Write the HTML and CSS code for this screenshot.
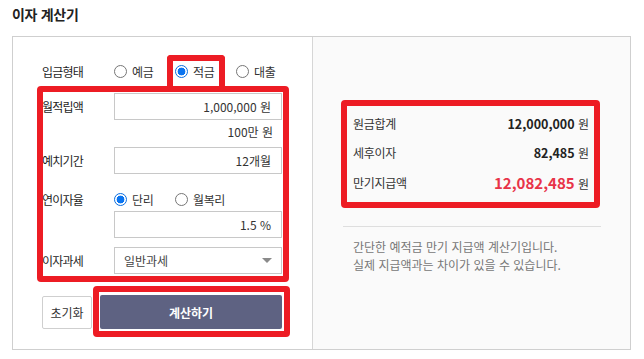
FILE: index.html
```html
<!DOCTYPE html>
<html lang="ko">
<head>
<meta charset="utf-8">
<title>이자 계산기</title>
<link rel="stylesheet" href="styles.css">
</head>
<body>
<h1 class="title">이자 계산기</h1>
<div class="calc">
  <section class="form">
    <div class="row row-radio">
      <span class="label">입금형태</span>
      <div class="radios">
        <label class="radio"><span class="dot"></span>예금</label>
        <label class="radio"><span class="dot on"></span>적금</label>
        <label class="radio"><span class="dot"></span>대출</label>
      </div>
    </div>
    <div class="row row-first">
      <span class="label">월적립액</span>
      <div class="field">1,000,000 원</div>
    </div>
    <div class="hint">100만 원</div>
    <div class="row row-period">
      <span class="label">예치기간</span>
      <div class="field">12개월</div>
    </div>
    <div class="row row-rate">
      <span class="label">연이자율</span>
      <div class="radios">
        <label class="radio"><span class="dot on"></span>단리</label>
        <label class="radio"><span class="dot"></span>월복리</label>
      </div>
    </div>
    <div class="row row-rate-input">
      <span class="label"></span>
      <div class="field">1.5 %</div>
    </div>
    <div class="row row-tax">
      <span class="label">이자과세</span>
      <div class="field select">일반과세<span class="caret"></span></div>
    </div>
    <div class="buttons">
      <button class="btn btn-reset">초기화</button>
      <button class="btn btn-calc">계산하기</button>
    </div>
    <div class="mark mark-deposit"></div>
    <div class="mark mark-fields"></div>
    <div class="mark mark-calc"></div>
  </section>
  <section class="result">
    <div class="summary">
      <div class="line"><span class="name">원금합계</span><span class="val"><b>12,000,000</b> 원</span></div>
      <div class="line"><span class="name">세후이자</span><span class="val"><b>82,485</b> 원</span></div>
      <div class="line"><span class="name">만기지급액</span><span class="val"><b class="total">12,082,485</b> 원</span></div>
      <div class="mark mark-result"></div>
    </div>
    <p class="note">간단한 예적금 만기 지급액 계산기입니다.<br>실제 지급액과는 차이가 있을 수 있습니다.</p>
  </section>
</div>
</body>
</html>
```
FILE: styles.css
```css
* { box-sizing: border-box; }
html, body { margin: 0; padding: 0; background: #fff; }
body {
  font-family: "Noto Sans CJK KR", "Noto Sans", sans-serif;
  color: #333;
  width: 644px;
  height: 359px;
  overflow: hidden;
}
.title {
  margin: 0;
  padding: 4px 0 0 12px;
  height: 36px;
  font-size: 14px;
  font-weight: 700;
  color: #222;
  line-height: 20px;
  letter-spacing: -0.3px;
}
.calc {
  margin-left: 12px;
  width: 619px;
  height: 314px;
  border: 1px solid #cfcfcf;
  display: grid;
  grid-template-columns: 300px 1fr;
}
.form {
  position: relative;
  border-right: 1px solid #d6d6d6;
  padding: 24px 29px 0 29px;
  font-size: 12px;
}
.row { display: flex; align-items: center; }
.label {
  width: 72px;
  flex: none;
  font-size: 12px;
  letter-spacing: -0.8px;
  color: #1e1e1e;
}
.row-radio { height: 20px; }
.row-first { margin-top: 12px; }
.row-period { margin-top: 7px; }
.row-rate { margin-top: 15px; height: 20px; }
.row-rate-input { margin-top: 2px; }
.row-tax { margin-top: 9px; }
.radios { display: flex; }
.radio {
  display: flex;
  align-items: center;
  gap: 5px;
  width: 61px;
  font-size: 12px;
  color: #333;
  letter-spacing: -0.4px;
}
.dot {
  width: 13px;
  height: 13px;
  border-radius: 50%;
  border: 1px solid #767676;
  background: #fff;
  flex: none;
}
.dot.on {
  border: 1px solid #0a6ee0;
  background: radial-gradient(circle, #0a74f0 0 3.6px, #fff 4.2px);
}
.field {
  width: 168px;
  height: 27px;
  border: 1px solid #c8c8c8;
  background: #fff;
  display: flex;
  align-items: center;
  justify-content: flex-end;
  padding: 0 10px 0 9px;
  font-size: 12px;
  color: #333;
}
.select { justify-content: space-between; color: #444; }
.caret {
  width: 0;
  height: 0;
  border-left: 5px solid transparent;
  border-right: 5px solid transparent;
  border-top: 5px solid #8a8a8a;
  margin-right: -1px;
}
.hint {
  margin-top: 4px;
  height: 16px;
  line-height: 16px;
  text-align: right;
  padding-right: 10px;
  font-size: 12px;
  color: #333;
}
.buttons {
  margin-top: 21px;
  display: flex;
  gap: 8px;
  align-items: center;
}
.btn {
  font-family: inherit;
  font-size: 12px;
  cursor: pointer;
  border-radius: 2px;
}
.btn-reset {
  width: 50px;
  height: 33px;
  background: #fff;
  border: 1px solid #cfcfcf;
  color: #333;
  padding: 0;
}
.btn-calc {
  width: 182px;
  height: 34px;
  background: #5e6282;
  border: 0;
  color: #fff;
  font-weight: 700;
}
.result {
  background: #fafafa;
  padding: 75px 29px 0 30px;
}
.summary {
  position: relative;
  padding: 0 12px 0 10px;
  display: flex;
  flex-direction: column;
  gap: 7.5px;
}
.line {
  height: 22px;
  display: flex;
  align-items: center;
  justify-content: space-between;
  font-size: 12px;
  color: #333;
}
.name { letter-spacing: -0.3px; }
.val b { font-weight: 700; font-size: 12.5px; color: #222; }
.val b.total { font-size: 15px; color: #e83348; }
.note {
  margin: 33px 0 0;
  border-top: 1px solid #dedede;
  padding: 11px 0 0 10px;
  font-size: 12px;
  line-height: 18px;
  color: #777;
}
.mark {
  position: absolute;
  border: 6px solid #ed1c24;
  border-radius: 4px;
  pointer-events: none;
}
.mark-deposit { left: 154px; top: 18px; width: 58px; height: 37px; border-bottom: 0; border-radius: 4px 4px 0 0; }
.mark-fields { left: 24px; top: 49px; width: 252px; height: 196px; }
.mark-calc { left: 80px; top: 249px; width: 197px; height: 51px; }
.mark-result { left: -2px; top: -12px; width: 259px; height: 108px; }
```
